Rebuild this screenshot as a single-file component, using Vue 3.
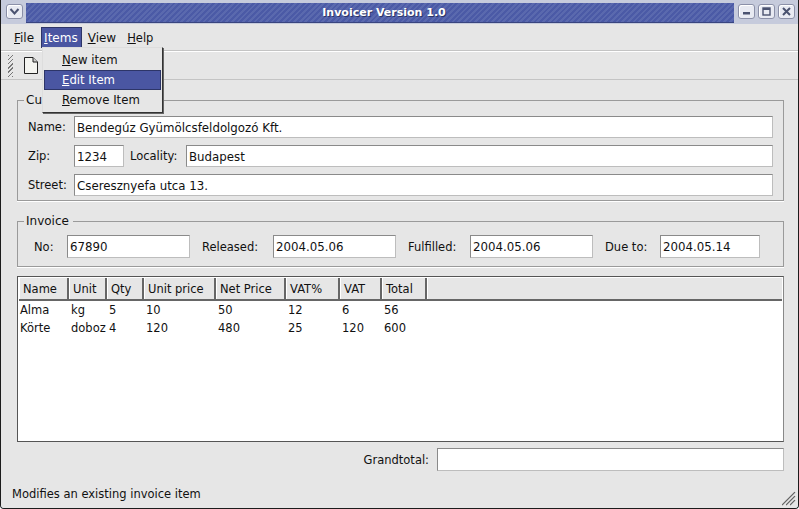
<script setup>
const columns = [
  { label: 'Name', width: 50 },
  { label: 'Unit', width: 38 },
  { label: 'Qty', width: 37 },
  { label: 'Unit price', width: 72 },
  { label: 'Net Price', width: 70 },
  { label: 'VAT%', width: 54 },
  { label: 'VAT', width: 42 },
  { label: 'Total', width: 45 },
]
const rows = [
  ['Alma', 'kg', '5', '10', '50', '12', '6', '56'],
  ['Körte', 'doboz', '4', '120', '480', '25', '120', '600'],
]
</script>

<template>
  <div class="window">
    <header class="titlebar">
      <button class="wm-btn menu-btn"><svg width="11" height="9" viewBox="0 0 11 9"><path d="M1.5 2 L5.5 6.5 L9.5 2" fill="none" stroke="#4a5270" stroke-width="2"/></svg></button>
      <div class="title-strip"><span>Invoicer Version 1.0</span></div>
      <div class="wm-group">
        <button class="wm-btn"><svg width="11" height="9" viewBox="0 0 11 9"><rect x="2" y="5" width="7" height="2.5" fill="#4a5270"/></svg></button>
        <button class="wm-btn"><svg width="11" height="9" viewBox="0 0 11 9"><rect x="2" y="1" width="7" height="7" fill="none" stroke="#4a5270" stroke-width="1.4"/><rect x="2" y="1" width="7" height="2" fill="#4a5270"/></svg></button>
        <button class="wm-btn"><svg width="11" height="9" viewBox="0 0 11 9"><path d="M2 1 L9 8 M9 1 L2 8" stroke="#4a5270" stroke-width="2"/></svg></button>
      </div>
    </header>

    <div class="client">
      <nav class="menubar">
        <span class="menu"><u>F</u>ile</span>
        <span class="menu open"><u>I</u>tems</span>
        <span class="menu"><u>V</u>iew</span>
        <span class="menu help"><u>H</u>elp</span>
      </nav>

      <div class="toolbar">
        <span class="grip"></span>
        <svg class="doc" width="16" height="19" viewBox="0 0 16 19">
          <path d="M1.5 1.5 H10 L14.5 6 V17.5 H1.5 Z" fill="#f4f4f0" stroke="#222" stroke-width="1"/>
          <path d="M10 1.5 V6 H14.5" fill="#cfcfcf" stroke="#222" stroke-width="1"/>
        </svg>
      </div>

      <ul class="dropdown">
        <li><u>N</u>ew item</li>
        <li class="active"><u>E</u>dit Item</li>
        <li><u>R</u>emove Item</li>
      </ul>

      <main class="content">
        <fieldset class="group customer">
          <legend>Customer</legend>
          <div class="rows">
            <div class="row">
              <label class="lbl-name">Name:</label>
              <div class="input grow">Bendegúz Gyümölcsfeldolgozó Kft.</div>
            </div>
            <div class="row">
              <label class="lbl-name">Zip:</label>
              <div class="input zip">1234</div>
              <label class="lbl-loc">Locality:</label>
              <div class="input grow">Budapest</div>
            </div>
            <div class="row">
              <label class="lbl-name">Street:</label>
              <div class="input grow">Cseresznyefa utca 13.</div>
            </div>
          </div>
        </fieldset>

        <fieldset class="group invoice">
          <legend>Invoice</legend>
          <div class="inv-row">
            <label class="i-no">No:</label>
            <div class="input w123">67890</div>
            <label class="i-rel">Released:</label>
            <div class="input w123">2004.05.06</div>
            <label class="i-ful">Fulfilled:</label>
            <div class="input w123">2004.05.06</div>
            <label class="i-due">Due to:</label>
            <div class="input w100">2004.05.14</div>
          </div>
        </fieldset>

        <section class="table">
          <div class="thead">
            <div v-for="c in columns" :key="c.label" class="th" :style="{ width: c.width + 'px' }">{{ c.label }}</div>
            <div class="th filler"></div>
          </div>
          <div class="tbody">
            <div v-for="r in rows" :key="r[0]" class="tr">
              <div v-for="(v, i) in r" :key="i" class="td" :style="{ width: columns[i].width + 'px' }">{{ v }}</div>
            </div>
          </div>
        </section>

        <div class="total">
          <label>Grandtotal:</label>
          <div class="input grand"></div>
        </div>
      </main>

      <footer class="status">
        <span>Modifies an existing invoice item</span>
        <svg class="sizegrip" width="16" height="16" viewBox="0 0 16 16">
          <path d="M15 1 L1 15 M15 5 L5 15 M15 9 L9 15" stroke="#fff" stroke-width="1"/>
          <path d="M15 2 L2 15 M15 6 L6 15 M15 10 L10 15" stroke="#666" stroke-width="1.2"/>
        </svg>
      </footer>
    </div>
  </div>
</template>

<style scoped>
.window {
  width: 799px;
  height: 509px;
  display: flex;
  flex-direction: column;
  box-sizing: border-box;
  background: #c6cbdc;
  border: 1px solid #1c1c1c;
  border-top: 0;
  border-radius: 0 0 4px 4px;
  font-family: "DejaVu Sans", sans-serif;
  font-size: 11.5px;
  color: #111;
  overflow: hidden;
}
.titlebar {
  height: 24px;
  flex: none;
  display: flex;
  align-items: flex-start;
  padding: 3px 3px 0 5px;
  box-sizing: border-box;
}
.title-strip {
  flex: 1;
  height: 19px;
  margin: 0 4px 0 3px;
  padding-left: 8px;
  display: flex;
  align-items: center;
  justify-content: center;
  color: #fff;
  font-size: 11px;
  font-weight: 700;
  background: repeating-linear-gradient(135deg, #4b5aa6 0 2px, #5a69ae 2px 4px);
  border-bottom: 1px solid #39457f;
  text-shadow: 1px 1px 0 #2c3566;
}
.wm-group { display: flex; gap: 3px; margin-top: 1px; }
.wm-btn {
  width: 17px;
  height: 15px;
  padding: 0;
  display: flex;
  align-items: center;
  justify-content: center;
  background: #e8eaf2;
  border: 1px solid #8b90a8;
  border-radius: 3px;
  box-shadow: inset 1px 1px 0 #fff;
}
.menu-btn { margin-top: 1px; }
.client {
  flex: 1;
  background: #e6e6e6;
  position: relative;
  display: flex;
  flex-direction: column;
  min-height: 0;
}
.menubar {
  height: 27px;
  flex: none;
  display: flex;
  align-items: center;
  padding: 1px 0 0 7px;
  font-size: 12px;
  box-sizing: border-box;
  border-bottom: 1px solid #c4c4c4;
}
.menu { padding: 4px 6px 2px; line-height: 15px; }
.menu.open {
  background: #4a56a2;
  color: #fff;
  outline: 1px solid #2d3568;
  outline-offset: -1px;
  padding: 4px 4px 2px 3px;
  margin-left: 1px;
}
.menu.help { padding-left: 5px; font-size: 11.5px; }
.toolbar {
  height: 29px;
  flex: none;
  display: flex;
  align-items: center;
  gap: 7px;
  padding-left: 7px;
  box-sizing: border-box;
  border-top: 1px solid #fff;
  border-bottom: 1px solid #c4c4c4;
}
.grip {
  width: 5px;
  height: 22px;
  background: repeating-linear-gradient(135deg, #777 0 1px, #e6e6e6 1px 3px);
}
.doc { margin-left: 3px; }
.dropdown {
  position: absolute;
  left: 41px;
  top: 23px;
  width: 121px;
  box-sizing: border-box;
  margin: 0;
  padding: 2px 1px;
  list-style: none;
  background: #e6e6e6;
  border: 1px solid #333;
  border-top-color: #ddd;
  border-left-color: #ddd;
  box-shadow: 1px 1px 0 #666;
  z-index: 5;
  font-size: 11.7px;
}
.dropdown li {
  height: 20px;
  line-height: 19px;
  padding: 1px 0 0 18px;
  box-sizing: border-box;
}
.dropdown li.active {
  background: #4a56a2;
  color: #fff;
  border: 1px solid #2d3568;
  padding: 1px 0 0 17px;
  line-height: 17px;
}
.content {
  flex: 1;
  display: flex;
  flex-direction: column;
  padding: 0 14px 0 16px;
  min-height: 0;
}
.group {
  margin: 0;
  padding: 0;
  border: 1px solid #9a9a9a;
  box-shadow: 0 1px 0 #fff;
  min-width: 0;
  box-sizing: border-box;
}
.group legend {
  padding: 0 4px 0 2px;
  margin-left: 6px;
  line-height: 16px;
  font-size: 12px;
}
.customer {
  margin-top: 12px;
  height: 109px;
}
.rows {
  padding: 8px 10px 0 10px;
  display: flex;
  flex-direction: column;
  gap: 7px;
}
.customer .input { height: 22px; line-height: 22px; }
.row { display: flex; align-items: center; }
.lbl-name { width: 46px; }
.lbl-loc { width: 48px; margin: 0 8px 0 6px; }
.input {
  height: 23px;
  line-height: 23px;
  box-sizing: border-box;
  padding-left: 2px;
  background: #fff;
  border: 1px solid #8a8a8a;
  border-bottom-color: #bdbdbd;
  border-right-color: #bdbdbd;
  white-space: nowrap;
  font-size: 11.8px;
}
.grow { flex: 1; }
.zip { width: 50px; }
.invoice {
  margin-top: 12px;
  height: 54px;
}
.inv-row {
  display: flex;
  align-items: center;
  padding: 6px 0 0 16px;
}
.inv-row label { white-space: nowrap; }
.i-no { width: 33px; }
.i-rel { margin: 0 14px 0 12px; width: 57px; }
.i-ful { margin: 0 13px 0 12px; width: 49px; }
.i-due { margin: 0 12px 0 12px; width: 43px; }
.w123 { width: 123px; }
.w100 { width: 100px; }
.table {
  margin-top: 9px;
  height: 166px;
  flex: none;
  background: #fff;
  border: 1px solid #555;
  border-right-color: #888;
  box-sizing: border-box;
  padding: 1px;
  display: flex;
  flex-direction: column;
}
.thead {
  display: flex;
  height: 21px;
  flex: none;
  background: #e6e6e6;
  border-bottom: 2px solid #666;
}
.th {
  flex: none;
  box-sizing: border-box;
  padding: 1px 0 0 3px;
  line-height: 20px;
  border-right: 2px solid #666;
  border-left: 1px solid #fff;
  white-space: nowrap;
}
.th.filler { flex: 1; border-right: 0; }
.tr { display: flex; height: 18px; line-height: 18px; }
.td { flex: none; box-sizing: border-box; padding-left: 2px; white-space: nowrap; }
.td:first-child { padding-left: 1px; }
.total {
  display: flex;
  align-items: center;
  justify-content: flex-end;
  margin-top: 6px;
  gap: 8px;
}
.grand { width: 347px; }
.status {
  position: relative;
  flex: none;
  margin-top: auto;
  height: 24px;
  line-height: 20px;
  padding-left: 11px;
  box-sizing: border-box;
}
.sizegrip { position: absolute; right: 2px; bottom: 2px; }
</style>
